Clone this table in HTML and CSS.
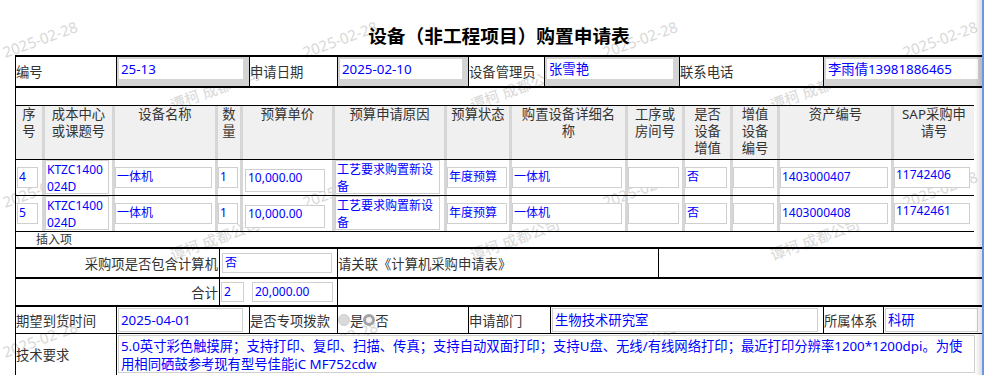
FILE: index.html
```html
<!DOCTYPE html>
<html lang="zh-CN">
<head>
<meta charset="utf-8">
<title>设备（非工程项目）购置申请表</title>
<link rel="stylesheet" href="styles.css">
</head>
<body>
<div class="wm" aria-hidden="true">
  <div class="wm-tile"><span class="wm-date">2025-02-28</span><span class="wm-name">谭柯 成都公司</span></div>
  <div class="wm-tile"><span class="wm-date">2025-02-28</span><span class="wm-name">谭柯 成都公司</span></div>
  <div class="wm-tile"><span class="wm-date">2025-02-28</span><span class="wm-name">谭柯 成都公司</span></div>
  <div class="wm-tile"><span class="wm-date">2025-02-28</span></div>
  <div class="wm-tile"><span class="wm-date">2025-02-28</span><span class="wm-name">谭柯 成都公司</span></div>
  <div class="wm-tile"><span class="wm-date">2025-02-28</span><span class="wm-name">谭柯 成都公司</span></div>
  <div class="wm-tile"><span class="wm-date">2025-02-28</span><span class="wm-name">谭柯 成都公司</span></div>
  <div class="wm-tile"><span class="wm-date">2025-02-28</span></div>
  <div class="wm-tile"><span class="wm-date">2025-02-28</span></div>
  <div class="wm-tile"><span class="wm-date">2025-02-28</span></div>
  <div class="wm-tile"><span class="wm-date">2025-02-28</span></div>
</div>

<div class="page">
  <h1 class="title">设备（非工程项目）购置申请表</h1>
  <div class="form">
    <div class="row r-info">
      <div class="cell lab w100">编号</div>
      <div class="cell gin w133"><span class="gbox">25-13</span></div>
      <div class="cell lab w88">申请日期</div>
      <div class="cell gin w131"><span class="gbox">2025-02-10</span></div>
      <div class="cell lab w76">设备管理员</div>
      <div class="cell gin w135"><span class="gbox">张雪艳</span></div>
      <div class="cell lab w144">联系电话</div>
      <div class="cell gin grow"><span class="gbox">李雨倩13981886465</span></div>
    </div>

    <div class="detail">
      <div class="blank"></div>
      <div class="grow-row ghead">
        <div class="hc c1">序号</div>
        <div class="hc c2 p3">成本中心或课题号</div>
        <div class="hc c3">设备名称</div>
        <div class="hc c4">数量</div>
        <div class="hc c5">预算单价</div>
        <div class="hc c6">预算申请原因</div>
        <div class="hc c7">预算状态</div>
        <div class="hc c8 p4">购置设备详细名称</div>
        <div class="hc c9 p2">工序或房间号</div>
        <div class="hc c10 p3">是否设备增值</div>
        <div class="hc c11 p3">增值设备编号</div>
        <div class="hc c12">资产编号</div>
        <div class="hc c13 p3">SAP采购申请号</div>
      </div>

      <div class="grow-row drow">
        <div class="dc c1"><span class="f f1">4</span></div>
        <div class="dc c2"><div class="ta ta2">KTZC1400024D</div></div>
        <div class="dc c3"><span class="f f3">一体机</span></div>
        <div class="dc c4"><span class="f f4">1</span></div>
        <div class="dc c5"><span class="f f5">10,000.00</span></div>
        <div class="dc c6"><div class="ta ta6">工艺要求购置新设备</div></div>
        <div class="dc c7"><span class="f f7">年度预算</span></div>
        <div class="dc c8"><span class="f f8">一体机</span></div>
        <div class="dc c9"><span class="f f9"></span></div>
        <div class="dc c10"><span class="f f10">否</span></div>
        <div class="dc c11"><span class="f f11"></span></div>
        <div class="dc c12"><span class="f f12">1403000407</span></div>
        <div class="dc c13"><span class="f f13">11742406</span></div>
      </div>

      <div class="grow-row drow">
        <div class="dc c1"><span class="f f1">5</span></div>
        <div class="dc c2"><div class="ta ta2">KTZC1400024D</div></div>
        <div class="dc c3"><span class="f f3">一体机</span></div>
        <div class="dc c4"><span class="f f4">1</span></div>
        <div class="dc c5"><span class="f f5">10,000.00</span></div>
        <div class="dc c6"><div class="ta ta6">工艺要求购置新设备</div></div>
        <div class="dc c7"><span class="f f7">年度预算</span></div>
        <div class="dc c8"><span class="f f8">一体机</span></div>
        <div class="dc c9"><span class="f f9"></span></div>
        <div class="dc c10"><span class="f f10">否</span></div>
        <div class="dc c11"><span class="f f11"></span></div>
        <div class="dc c12"><span class="f f12">1403000408</span></div>
        <div class="dc c13"><span class="f f13">11742461</span></div>
      </div>

      <div class="insert">插入项</div>
    </div>

    <div class="row r-pc">
      <div class="cell lab rt w203">采购项是否包含计算机</div>
      <div class="cell top w118"><span class="box sm b-pc">否</span></div>
      <div class="cell lab w321">请关联《计算机采购申请表》</div>
      <div class="cell grow"></div>
    </div>

    <div class="row r-sum">
      <div class="cell lab rt w203">合计</div>
      <div class="cell top w30"><span class="box sm b-qty">2</span></div>
      <div class="cell top noline w88"><span class="box sm b-amt">20,000.00</span></div>
      <div class="cell grow"></div>
    </div>

    <div class="row r-date">
      <div class="cell lab w100">期望到货时间</div>
      <div class="cell top w133"><span class="box b-date">2025-04-01</span></div>
      <div class="cell lab w88">是否专项拨款</div>
      <div class="cell lab w131">
        <span class="radio"></span><span>是</span><span class="radio on"></span><span>否</span>
      </div>
      <div class="cell lab w82">申请部门</div>
      <div class="cell top w273"><span class="box b-dept">生物技术研究室</span></div>
      <div class="cell lab w60">所属体系</div>
      <div class="cell top grow"><span class="box b-sys">科研</span></div>
    </div>

    <div class="row r-tech">
      <div class="cell lab w100">技术要求</div>
      <div class="cell top grow"><div class="tech">5.0英寸彩色触摸屏；支持打印、复印、扫描、传真；支持自动双面打印；支持U盘、无线/有线网络打印；最近打印分辨率1200*1200dpi。为使<br>用相同硒鼓参考现有型号佳能iC MF752cdw</div></div>
    </div>
  </div>
</div>

<div class="edge" aria-hidden="true"></div>
</body>
</html>
```

FILE: styles.css
```css
html {
  background: #fff;
}
html, body {
  margin: 0;
  padding: 0;
}
body {
  width: 984px;
  height: 375px;
  overflow: hidden;
  position: relative;
  font-family: "Noto Sans", "Noto Sans CJK SC", sans-serif;
  font-size: 13.33px;
  color: #333;
}

/* watermark */
.wm {
  position: absolute;
  left: 0;
  top: 0;
  z-index: -1;
  width: 984px;
  height: 375px;
  overflow: hidden;
  display: grid;
  grid-template-columns: 300px 300px 300px 84px;
  grid-auto-rows: 150px;
}
.wm-tile {
  position: relative;
}
.wm-date,
.wm-name {
  position: absolute;
  color: #d8d8d8;
  font-size: 15px;
  line-height: 15px;
  white-space: nowrap;
  transform: rotate(-20deg);
}
.wm-date {
  left: 1px;
  top: 32px;
}
.wm-name {
  left: 168px;
  top: 82px;
}

.page {
  margin-left: 15px;
  width: 969px;
  overflow: hidden;
}
.title {
  margin: 0;
  height: 55px;
  box-sizing: border-box;
  padding-top: 25px;
  padding-right: 1px;
  font-family: "Noto Sans CJK SC", sans-serif;
  font-size: 18.7px;
  line-height: 20px;
  font-weight: 700;
  color: #000;
  text-align: center;
}
.form {
  border-left: 1px solid #000;
}

.row {
  display: flex;
}
.cell {
  flex: none;
  box-sizing: border-box;
  border-left: 1px solid #000;
  display: flex;
  align-items: center;
  white-space: nowrap;
}
.cell:first-child {
  border-left: 0;
}
.cell.noline {
  border-left-color: transparent;
}
.cell.rt {
  justify-content: flex-end;
  padding-right: 1px;
}
.cell.top {
  align-items: flex-start;
}
.grow {
  flex: 1;
}

.w30 { width: 30px; }
.w60 { width: 60px; }
.w76 { width: 76px; }
.w82 { width: 82px; }
.w88 { width: 88px; }
.w100 { width: 100px; }
.w118 { width: 118px; }
.w131 { width: 131px; }
.w133 { width: 133px; }
.w135 { width: 135px; }
.w144 { width: 144px; }
.w203 { width: 203px; }
.w273 { width: 273px; }
.w321 { width: 321px; }

/* info row */
.r-info {
  height: 33px;
  box-sizing: border-box;
  border-top: 2px solid #000;
  border-bottom: 2px solid #000;
}
.gin {
  background: #d4d4d4;
  padding: 2px 6px 7px 2px;
  align-items: stretch;
}
.gbox {
  flex: 1;
  background: #fff;
  color: #0000ff;
  line-height: 20px;
  padding-left: 2px;
}

/* detail table */
.blank {
  height: 17px;
}
.grow-row {
  display: flex;
  width: 958px;
}
.ghead {
  height: 55px;
  box-sizing: border-box;
  border-top: 1px solid #000;
  border-bottom: 1px solid #000;
}
.drow {
  height: 36px;
  box-sizing: border-box;
  border-bottom: 1px solid #000;
}
.hc,
.dc {
  flex: none;
  box-sizing: border-box;
  border-right: 3px solid #d6d6d6;
}
.hc.c13,
.dc.c13 {
  border-right: 0;
}
.hc {
  background: #f0f0f0;
  text-align: center;
  line-height: 17px;
  font-size: 13.33px;
  color: #333;
}
.p2 { padding: 0 2px; }
.p3 { padding: 0 3px; }
.p4 { padding: 0 4px; }

.c1 { width: 29px; }
.c2 { width: 70px; }
.c3 { width: 103px; }
.c4 { width: 25px; }
.c5 { width: 92px; }
.c6 { width: 112px; }
.c7 { width: 65px; }
.c8 { width: 116px; }
.c9 { width: 57px; }
.c10 { width: 48px; }
.c11 { width: 47px; }
.c12 { width: 114px; }
.c13 { width: 80px; }

.dc {
  padding-top: 7px;
}
.dc.c2,
.dc.c6 {
  padding-top: 0;
}
.f {
  display: block;
  box-sizing: border-box;
  height: 21px;
  border: 1px solid #cfcfcf;
  background: #fff;
  color: #0000ff;
  font-size: 12px;
  line-height: 17px;
  padding-left: 1px;
  white-space: nowrap;
  overflow: hidden;
}
.f1 { width: 21px; margin-left: 1px; }
.f3 { width: 97px; }
.f4 { width: 20px; }
.f5 { width: 80px; margin-left: 2px; margin-top: 2px; height: 23px; line-height: 16px; padding-left: 2px; }
.f7 { width: 60px; }
.f8 { width: 110px; }
.f9 { width: 51px; }
.f10 { width: 42px; }
.f11 { width: 41px; }
.f12 { width: 108px; }
.f13 { width: 76px; line-height: 14px; }

.ta {
  box-sizing: border-box;
  height: 34px;
  border: 1px solid #cfcfcf;
  background: #fff;
  color: #0000ff;
  font-size: 12px;
  line-height: 17px;
  padding: 0 2px 0 1px;
  word-break: break-all;
  overflow: hidden;
}
.ta2 { width: 64px; }
.ta6 { width: 105px; }

.insert {
  height: 15px;
  line-height: 15px;
  font-size: 12px;
  padding-left: 20px;
  color: #333;
}

/* lower rows */
.r-pc {
  height: 32px;
  box-sizing: border-box;
  border-top: 2px solid #000;
  border-bottom: 2px solid #000;
}
.r-sum {
  height: 28px;
  box-sizing: border-box;
  border-bottom: 2px solid #000;
}
.r-date {
  height: 27px;
  box-sizing: border-box;
  border-bottom: 1px solid #000;
}
.r-tech {
  height: 41px;
}

.box {
  display: block;
  box-sizing: border-box;
  border: 1px solid #d0d0d0;
  background: #fff;
  color: #0000ff;
  padding-left: 2px;
  white-space: nowrap;
  overflow: hidden;
}
.box.sm {
  font-size: 12px;
  height: 20px;
  line-height: 18px;
}
.b-pc { width: 110px; margin: 4px 0 0 2px; }
.b-qty { width: 23px; margin: 3px 0 0 1px; }
.b-amt { width: 81px; margin: 3px 0 0 2px; }
.b-date { width: 125px; height: 24px; line-height: 22px; margin: 1px 0 0 1px; }
.b-dept { width: 266px; height: 24px; line-height: 22px; margin: 1px 0 0 1px; }
.b-sys { width: 93px; height: 24px; line-height: 22px; margin: 1px 0 0 1px; }

.radio {
  width: 12px;
  height: 12px;
  box-sizing: border-box;
  border-radius: 50%;
  background: #dadada;
  border: 1px solid #cfcfcf;
}
.radio.on {
  background: #f2f2f2;
  border: 3.5px solid #a3a3a3;
}

.tech {
  box-sizing: border-box;
  width: 857px;
  height: 38px;
  margin: 1px 0 0 1px;
  border: 1px solid #d0d0d0;
  background: #fff;
  color: #0000ff;
  line-height: 18px;
  padding: 1px 2px;
  white-space: nowrap;
  overflow: hidden;
}

/* right window edge */
.edge {
  position: absolute;
  left: 975px;
  top: 0;
  width: 9px;
  height: 375px;
  background: linear-gradient(to right, rgba(0, 0, 0, 0) 0px, rgba(0, 0, 0, 0.13) 7px, #6f94e8 7px, #6f94e8 9px);
}
```
